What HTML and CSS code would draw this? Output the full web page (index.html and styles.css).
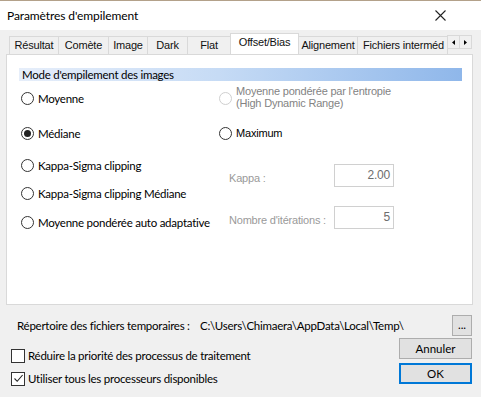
FILE: index.html
```html
<!DOCTYPE html>
<html lang="fr">
<head>
<meta charset="UTF-8">
<title>Paramètres d'empilement</title>
<link rel="stylesheet" href="styles.css">
</head>
<body>

<div class="titlebar">
  <span class="title">Paramètres d'empilement</span>
  <svg class="close" width="11" height="11" viewBox="0 0 11 11"><path d="M0.5 0.5 L10.5 10.5 M10.5 0.5 L0.5 10.5" stroke="#222" stroke-width="1.1" fill="none"/></svg>
</div>

<div class="tabs">
  <div class="tab t-res">Résultat</div>
  <div class="tab t-com">Comète</div>
  <div class="tab t-img">Image</div>
  <div class="tab t-dark">Dark</div>
  <div class="tab t-flat">Flat</div>
  <div class="tab t-off active">Offset/Bias</div>
  <div class="tab t-ali">Alignement</div>
  <div class="tab t-fic">Fichiers interméd</div>
  <div class="arrows">
    <span class="arrow"><svg width="3" height="5" viewBox="0 0 3 5"><path d="M3 0 L0 2.5 L3 5 Z" fill="#000"/></svg></span>
    <span class="arrow"><svg width="3" height="5" viewBox="0 0 3 5"><path d="M0 0 L3 2.5 L0 5 Z" fill="#000"/></svg></span>
  </div>
</div>

<div class="panel">
  <div class="band">Mode d'empilement des images</div>
  <div class="cols">
    <div class="col left">
      <label class="opt r1"><span class="radio"></span>Moyenne</label>
      <label class="opt r2"><span class="radio on"></span>Médiane</label>
      <label class="opt r3"><span class="radio"></span>Kappa-Sigma clipping</label>
      <label class="opt r4"><span class="radio"></span>Kappa-Sigma clipping Médiane</label>
      <label class="opt r5"><span class="radio"></span>Moyenne pondérée auto adaptative</label>
    </div>
    <div class="col right">
      <label class="opt ms off"><span class="radio dis"></span><span class="two">Moyenne pondérée par l'entropie<br>(High Dynamic Range)</span></label>
      <label class="opt ms max"><span class="radio"></span>Maximum</label>
      <div class="field f1"><span class="flabel">Kappa :</span><span class="box">2.00</span></div>
      <div class="field f2"><span class="flabel">Nombre d'itérations :</span><span class="box">5</span></div>
    </div>
  </div>
</div>

<div class="dirrow">
  <span class="dirlabel">Répertoire des fichiers temporaires :</span>
  <span class="path">C:\Users\Chimaera\AppData\Local\Temp\</span>
  <button class="btn dots">...</button>
</div>

<div class="footer">
  <div class="checks">
    <label class="check"><span class="cbox"></span>Réduire la priorité des processus de traitement</label>
    <label class="check"><span class="cbox"><svg width="11" height="11" viewBox="0 0 11 11"><path d="M1.5 5.5 L4.2 8.3 L9.6 2" stroke="#222" stroke-width="1.1" fill="none"/></svg></span>Utiliser tous les processeurs disponibles</label>
  </div>
  <div class="buttons">
    <button class="btn wide">Annuler</button>
    <button class="btn wide ok">OK</button>
  </div>
</div>

</body>
</html>
```

FILE: styles.css
```css
body {
  margin: 0;
  width: 481px;
  height: 397px;
  overflow: hidden;
  background-color: #f0f0f0;
  font-family: Lato, "Noto Sans", sans-serif;
  font-size: 11.5px;
  letter-spacing: -0.25px;
  color: #000;
}
.titlebar {
  height: 29px;
  background-color: #fff;
  border-top: 1px solid #b3a18a;
  display: flex;
  align-items: center;
  justify-content: space-between;
  padding: 0 35px 0 7px;
}
.title {
  font-size: 12px;
  letter-spacing: -0.1px;
  margin-top: -1px;
}
.tabs {
  display: flex;
  align-items: flex-end;
  height: 24px;
  margin-left: 9px;
  font-family: "Liberation Sans", sans-serif;
  font-size: 11px;
  letter-spacing: -0.2px;
}
.tab {
  box-sizing: border-box;
  height: 18px;
  line-height: 17px;
  background-color: #f0f0f0;
  border: 1px solid #d9d9d9;
  border-bottom: none;
  margin-right: -1px;
  white-space: nowrap;
  text-align: center;
  color: #111;
  overflow: hidden;
}
.t-res { width: 50px; }
.t-com { width: 51px; }
.t-img { width: 40px; }
.t-dark { width: 41px; }
.t-flat { width: 44px; }
.t-off { width: 69px; }
.t-ali { width: 60px; }
.t-fic { width: 91px; text-align: left; padding-left: 5px; }
.tab.active {
  height: 21px;
  line-height: 17px;
  background-color: #fff;
  position: relative;
  z-index: 1;
}
.arrows {
  display: flex;
  align-self: flex-start;
  margin-top: 5px;
}
.arrow {
  width: 13px;
  height: 14px;
  box-sizing: border-box;
  border: 1px solid #d9d9d9;
  background-color: #f0f0f0;
  margin-right: -1px;
  display: flex;
  align-items: center;
  justify-content: center;
}
.panel {
  margin-left: 6px;
  width: 465px;
  height: 249px;
  background-color: #fff;
  border: 1px solid #d9d9d9;
}
.band {
  margin: 13px 10px 0 12px;
  height: 13px;
  line-height: 13px;
  padding-left: 3px;
  background: linear-gradient(to right, #e6eefa, #c6dbf5 45%, #8fb7ea);
}
.cols {
  display: flex;
  padding-left: 14px;
}
.col {
  display: flex;
  flex-direction: column;
}
.left {
  width: 198px;
}
.opt {
  display: flex;
  align-items: center;
  height: 20px;
  white-space: nowrap;
}
.left .r1 { margin-top: 7px; }
.left .r2 { margin-top: 15px; }
.left .r3 { margin-top: 12px; }
.left .r4 { margin-top: 8px; }
.left .r5 { margin-top: 9px; }
.radio {
  width: 11px;
  height: 11px;
  border: 1px solid #333;
  border-radius: 50%;
  margin-right: 4px;
  display: flex;
  align-items: center;
  justify-content: center;
  flex-shrink: 0;
}
.radio.on::after {
  content: "";
  width: 7px;
  height: 7px;
  border-radius: 50%;
  background-color: #222;
}
.radio.dis {
  border-color: #cfcfcf;
}
.ms {
  font-family: "Liberation Sans", sans-serif;
  font-size: 11px;
  letter-spacing: -0.2px;
}
.off {
  color: #838383;
  height: 26px;
  margin-top: 4px;
}
.two {
  line-height: 12px;
  margin-top: -2px;
}
.max {
  margin-top: 12px;
}
.field {
  display: flex;
  align-items: center;
  font-family: "Liberation Sans", sans-serif;
  font-size: 11px;
  letter-spacing: -0.2px;
  color: #9a9a9a;
}
.flabel {
  width: 105px;
  padding-left: 10px;
  margin-top: 4px;
}
.f1 { margin-top: 21px; }
.f2 { margin-top: 19px; }
.box {
  width: 55px;
  height: 21px;
  line-height: 20px;
  border: 1px solid #d0d0d0;
  text-align: right;
  padding-right: 3px;
  color: #6d6d6d;
  font-size: 12px;
}
.dirrow {
  display: flex;
  align-items: center;
  padding: 9px 9px 0 17px;
  height: 22px;
  white-space: nowrap;
}
.dirlabel {
  width: 183px;
}
.path {
  flex: 1;
}
.btn {
  font-family: Lato, "Noto Sans", sans-serif;
  font-size: 11.5px;
  background-color: #e1e1e1;
  border: 1px solid #adadad;
  padding: 0;
  color: #000;
}
.dots {
  width: 20px;
  height: 21px;
  line-height: 14px;
}
.footer {
  display: flex;
  justify-content: space-between;
  padding: 2px 9px 0 11px;
}
.checks {
  display: flex;
  flex-direction: column;
  padding-top: 10px;
  gap: 8px;
}
.check {
  display: flex;
  align-items: center;
  height: 15px;
}
.cbox {
  width: 12px;
  height: 12px;
  border: 1px solid #333;
  background-color: #fff;
  margin-right: 3px;
  display: flex;
  align-items: center;
  justify-content: center;
}
.buttons {
  display: flex;
  flex-direction: column;
  gap: 4px;
}
.wide {
  width: 73px;
  height: 21px;
}
.ok {
  border: 2px solid #0078d7;
}
```
